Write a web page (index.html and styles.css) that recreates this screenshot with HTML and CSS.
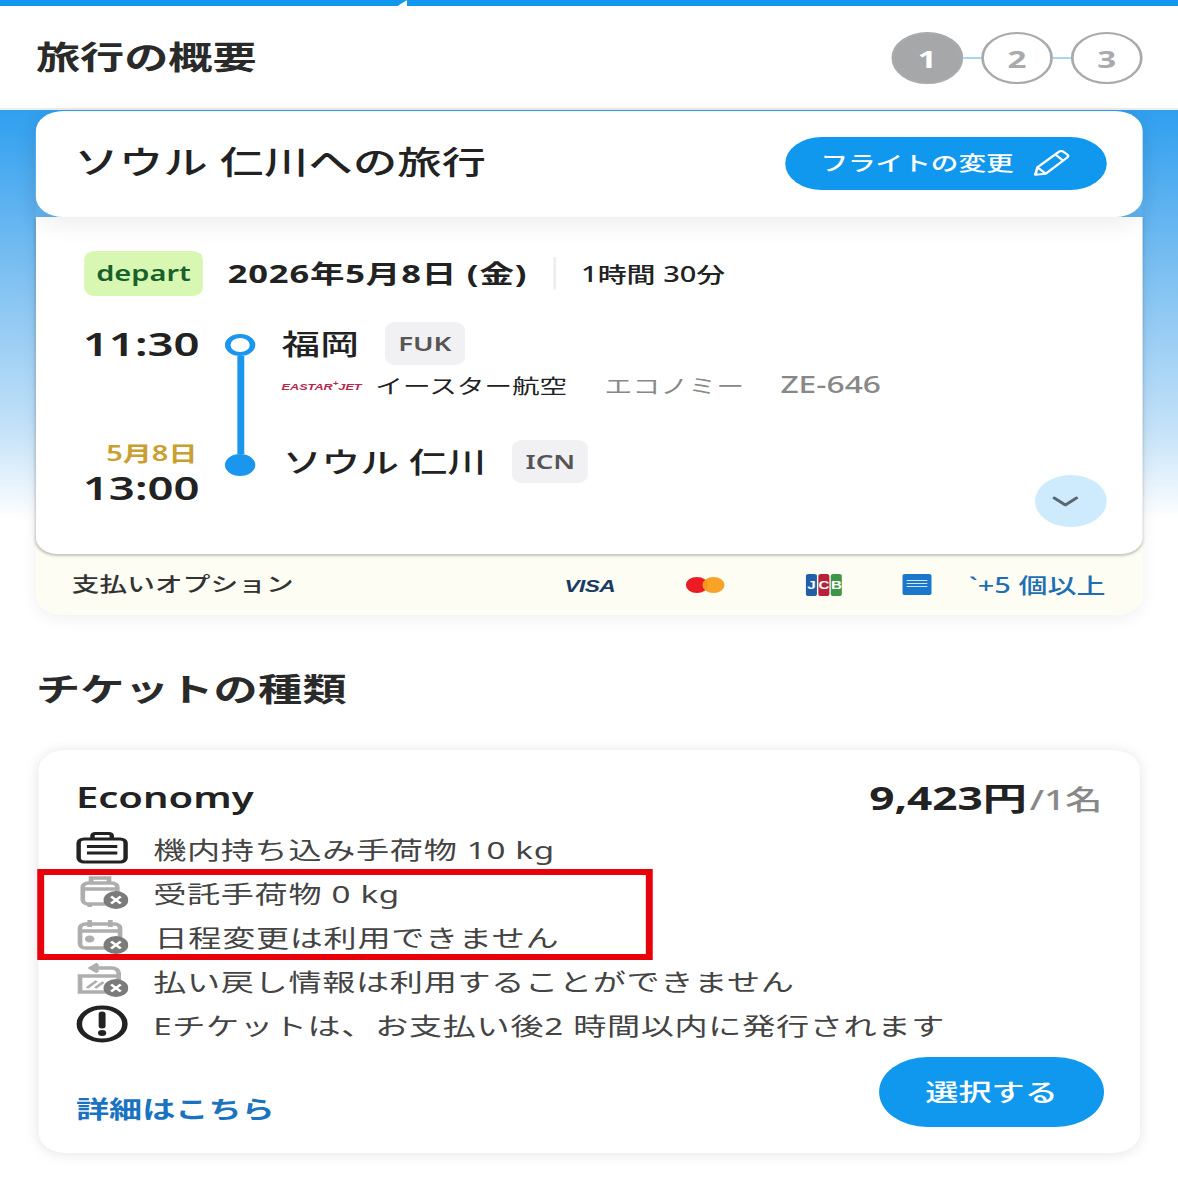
FILE: index.html
```html
<!DOCTYPE html>
<html lang="ja">
<head>
    <meta charset="utf-8">
    <title>旅行の概要</title>
    <link rel="stylesheet" href="styles.css">
</head>
<body>
    <div class="page">
        <div class="top-bar"><span class="top-notch"></span></div>
        <header class="header">
            <h1 class="header-title">旅行の概要</h1>
            <div class="steps">
                <span class="step step-active">1</span>
                <span class="step-line"></span>
                <span class="step">2</span>
                <span class="step-line"></span>
                <span class="step">3</span>
            </div>
        </header>

        <main class="main">
            <section class="trip-card">
                <div class="trip-head">
                    <h2 class="trip-title">ソウル 仁川への旅行</h2>
                    <button class="change-button">
                        <span class="change-label">フライトの変更</span>
                        <svg class="pencil" viewBox="0 0 28 28" width="30" height="30" fill="none" stroke="#fff" stroke-width="1.8" stroke-linejoin="round">
                            <path d="M3 25l1.500-7L19 3.500a2 2 0 0 1 3 0l2.500 2.500a2 2 0 0 1 0 3L10 24z"/>
                            <path d="M4.500 18l5.500 6M16.500 6l5.500 6"/>
                        </svg>
                    </button>
                </div>

                <div class="trip-body">
                    <div class="date-row">
                        <span class="depart-badge">depart</span>
                        <span class="date-text">2026年5月8日 (金)</span>
                        <span class="duration">1時間 30分</span>
                    </div>

                    <div class="timeline">
                        <div class="times">
                            <div class="time">11:30</div>
                            <div>
                                <div class="arrive-date">5月8日</div>
                                <div class="time">13:00</div>
                            </div>
                        </div>
                        <div class="track">
                            <span class="track-ring"></span>
                            <span class="track-line"></span>
                            <span class="track-dot"></span>
                        </div>
                        <div class="places">
                            <div class="city-row">
                                <span class="city">福岡</span>
                                <span class="code">FUK</span>
                            </div>
                            <div class="airline-row">
                                <span class="airline-logo">EASTAR<sup>+</sup>JET</span>
                                <span class="airline-name">イースター航空</span>
                                <span class="airline-info">エコノミー</span>
                                <span class="airline-number">ZE-646</span>
                            </div>
                            <div class="city-row city-row-last">
                                <span class="city">ソウル 仁川</span>
                                <span class="code">ICN</span>
                            </div>
                        </div>
                    </div>

                    <button class="expand-button" aria-label="expand">
                        <svg class="expand-icon" viewBox="0 0 20 12" width="20" height="12" fill="none" stroke="#5a6672" stroke-width="2.600" stroke-linecap="round" stroke-linejoin="round">
                            <path d="M2 2l8 7 8-7"/>
                        </svg>
                    </button>
                </div>

                <div class="pay-row">
                    <span class="pay-label">支払いオプション</span>
                    <span class="visa">VISA</span>
                    <span class="mastercard"><i class="mc-red"></i><i class="mc-orange"></i></span>
                    <span class="jcb"><i class="jcb-blue">J</i><i class="jcb-red">C</i><i class="jcb-green">B</i></span>
                    <span class="amex"><i></i><i></i><i></i></span>
                    <a class="pay-more">`+5 個以上</a>
                </div>
            </section>

            <h2 class="section-title">チケットの種類</h2>

            <section class="ticket-card">
                <div class="ticket-head">
                    <span class="ticket-name">Economy</span>
                    <span class="ticket-price">9,423円<small>/1名</small></span>
                </div>

                <ul class="ticket-list">
                    <li class="ticket-row">
                        <svg class="row-icon" viewBox="0 0 38 34" fill="none" stroke="#222" stroke-width="3.200">
                            <rect x="2" y="8" width="34" height="23" rx="4"/>
                            <path d="M12 8V4.500a2 2 0 0 1 2-2h10a2 2 0 0 1 2 2V8M8 15.500h22M8 22h22"/>
                        </svg>
                        機内持ち込み手荷物 10 kg
                    </li>
                    <li class="ticket-row">
                        <svg class="row-icon" viewBox="0 0 38 34" fill="none" stroke="#aeaeae" stroke-width="3.400">
                            <rect x="5" y="8" width="25" height="21" rx="4"/>
                            <path d="M11 8V3h13v5M5 14h25M10 29v3M25 29v3"/>
                            <circle cx="29" cy="25" r="9" fill="#7b7b7b" stroke="none"/>
                            <path d="M25.500 21.500l7 7M32.500 21.500l-7 7" stroke="#fff" stroke-width="2.200"/>
                        </svg>
                        受託手荷物 0 kg
                    </li>
                    <li class="ticket-row">
                        <svg class="row-icon" viewBox="0 0 38 34" fill="none" stroke="#aeaeae" stroke-width="3.400">
                            <rect x="3" y="5" width="29" height="24" rx="4"/>
                            <path d="M10 1v7M25 1v7M3 12h29"/>
                            <circle cx="10" cy="20" r="1.800" fill="#aeaeae"/>
                            <circle cx="29" cy="26" r="9" fill="#7b7b7b" stroke="none"/>
                            <path d="M25.500 22.500l7 7M32.500 22.500l-7 7" stroke="#fff" stroke-width="2.200"/>
                        </svg>
                        <span class="row-shift">日程変更は利用できません</span>
                    </li>
                    <li class="ticket-row">
                        <svg class="row-icon" viewBox="0 0 38 34" fill="none" stroke="#aeaeae" stroke-width="3.400">
                            <path d="M16 1l-5 4 5 4M11 5h15a5 5 0 0 1 5 5v4"/>
                            <path d="M3 13h28v16H3z"/>
                            <path d="M8 25l7-7M14 25l6-6" stroke-width="2.400"/>
                            <circle cx="29" cy="25" r="9" fill="#7b7b7b" stroke="none"/>
                            <path d="M25.500 21.500l7 7M32.500 21.500l-7 7" stroke="#fff" stroke-width="2.200"/>
                        </svg>
                        払い戻し情報は利用することができません
                    </li>
                    <li class="ticket-row">
                        <svg class="row-icon" viewBox="0 0 38 38" fill="none" stroke="#222" stroke-width="4">
                            <circle cx="19" cy="19" r="16.500"/>
                            <path d="M19 9v12" stroke-width="5" stroke-linecap="round"/>
                            <circle cx="19" cy="28" r="3" fill="#222" stroke="none"/>
                        </svg>
                        Eチケットは、お支払い後2 時間以内に発行されます
                    </li>
                </ul>

                <div class="ticket-foot">
                    <a class="detail-link">詳細はこちら</a>
                    <button class="select-button">選択する</button>
                </div>

                <div class="highlight-box"></div>
            </section>
        </main>
    </div>
</body>
</html>
```

FILE: styles.css
```css
html, body {
    margin: 0;
    padding: 0;
    height: 1178px;
    overflow: hidden;
    background: #fff;
}

/* the whole screen is stretched sideways */
.page {
    width: 854px;
    height: 1178px;
    transform: scaleX(1.38);
    transform-origin: left top;
    font-family: "Noto Sans", "Noto Sans CJK JP", sans-serif;
    color: #222;
}

.top-bar {
    height: 6px;
    background: #1098ef;
    position: relative;
}

.top-notch {
    position: absolute;
    left: 288px;
    top: 0;
    width: 7px;
    height: 6px;
    background: #fff;
    clip-path: polygon(100% 0, 100% 100%, 0 100%);
}

.header {
    height: 104px;
    box-sizing: border-box;
    padding: 0 26px 0 26px;
    display: flex;
    align-items: center;
    justify-content: space-between;
    background: #fff;
    border-bottom: 2px solid #eee;
}

.header-title {
    margin: 0;
    font-size: 32px;
    line-height: 44px;
    font-weight: 700;
    color: #2a2a2a;
}

.steps {
    display: flex;
    align-items: center;
    margin-top: 2px;
}

.step {
    width: 52px;
    height: 52px;
    box-sizing: border-box;
    border: 2px solid #a8aaab;
    border-radius: 50%;
    display: flex;
    align-items: center;
    justify-content: center;
    font-size: 24px;
    font-weight: 700;
    color: #a8aaab;
}

.step-active {
    background: #a5a7a8;
    color: #fff;
}

.step-line {
    width: 13px;
    height: 2px;
    background: #a5d6f5;
}

.main {
    padding: 1px 26px 0;
    background: linear-gradient(#2f9fef 0, #77bdf1 150px, #c4e2f8 320px, #fff 410px) no-repeat;
    background-size: 100% 410px;
}

.trip-card {
    border-radius: 20px;
    box-shadow: 0 4px 14px rgba(0, 0, 0, 0.06);
}

.trip-head {
    height: 106px;
    box-sizing: border-box;
    padding: 0 26px 0 28px;
    display: flex;
    align-items: center;
    justify-content: space-between;
    background: #fff;
    border-radius: 20px;
    box-shadow: 0 8px 20px rgba(0, 0, 0, 0.07);
    position: relative;
    z-index: 2;
}

.trip-title {
    margin: 0 0 4px;
    font-size: 32px;
    line-height: 44px;
    font-weight: 500;
    letter-spacing: 0.2px;
    color: #222;
}

.change-button {
    width: 233px;
    height: 53px;
    border: none;
    border-radius: 27px;
    background: #1098ef;
    color: #fff;
    font: inherit;
    font-size: 20px;
    font-weight: 500;
    display: flex;
    align-items: center;
    justify-content: center;
    gap: 12px;
    padding: 0;
    margin-top: -2px;
}

.change-label {
    margin-bottom: 2px;
}

.pencil {
    flex: none;
}

.trip-body {
    height: 337px;
    box-sizing: border-box;
    padding: 34px 26px 0 35px;
    background: #fff;
    border-radius: 0 0 16px 16px;
    box-shadow: 0 2px 2px rgba(0, 0, 0, 0.2), 0 0 6px rgba(0, 0, 0, 0.05);
    position: relative;
    z-index: 1;
}

.date-row {
    display: flex;
    align-items: center;
}

.depart-badge {
    width: 86px;
    height: 45px;
    padding-bottom: 2px;
    box-sizing: border-box;
    border-radius: 8px;
    background: #d8f7b2;
    color: #17612a;
    font-size: 21px;
    font-weight: 600;
    display: flex;
    align-items: center;
    justify-content: center;
    margin-right: 18px;
}

.date-text {
    font-size: 25px;
    font-weight: 700;
    letter-spacing: 0.6px;
    padding-right: 19px;
    border-right: 2px solid #eee;
    line-height: 33px;
}

.duration {
    font-size: 21px;
    font-weight: 500;
    margin-left: 18px;
    margin-bottom: 2px;
}

.timeline {
    display: flex;
    height: 188px;
    margin-top: 26px;
}

.times {
    width: 102px;
    display: flex;
    flex-direction: column;
    justify-content: space-between;
}

.time {
    font-size: 33px;
    line-height: 44px;
    font-weight: 600;
    margin-left: -1px;
}

.arrive-date {
    font-size: 21px;
    line-height: 28px;
    font-weight: 600;
    color: #c9a02f;
    padding-left: 16px;
    margin-top: 1px;
    margin-bottom: -1px;
}

.track {
    width: 22px;
    height: 142px;
    margin-top: 12px;
    display: flex;
    flex-direction: column;
    align-items: center;
}

.track-ring {
    flex: none;
    width: 22px;
    height: 22px;
    box-sizing: border-box;
    border: 4px solid #1a96ee;
    border-radius: 50%;
}

.track-line {
    flex: 1;
    width: 5px;
    background: #1a96ee;
}

.track-dot {
    flex: none;
    width: 22px;
    height: 22px;
    border-radius: 50%;
    background: #1a96ee;
}

.places {
    margin: -1px 0 0 19px;
}

.city-row {
    display: flex;
    align-items: center;
    height: 44px;
}

.city-row-last {
    margin-top: 40px;
    margin-left: 1px;
}

.city {
    font-size: 28px;
    font-weight: 500;
    margin-right: 19px;
}

.code {
    height: 43px;
    padding: 0 9.500px;
    border-radius: 8px;
    background: #f1f1f3;
    color: #555;
    font-size: 20px;
    font-weight: 600;
    display: flex;
    align-items: center;
}

.airline-row {
    display: flex;
    align-items: center;
    height: 28px;
    margin-top: 6px;
    font-size: 20px;
}

.airline-logo {
    width: 58px;
    margin: 4px 10px 0 0;
    font-family: "Liberation Sans", sans-serif;
    font-size: 9.200px;
    font-weight: 700;
    font-style: italic;
    color: #b8274a;
    white-space: nowrap;
}

.airline-logo sup {
    font-size: 7px;
    line-height: 0;
}

.airline-name {
    margin-right: 27px;
}

.airline-info {
    color: #888;
    letter-spacing: 0.3px;
    margin-right: 26px;
}

.airline-number {
    color: #888;
    font-size: 23px;
    font-weight: 500;
    margin-bottom: 2px;
}

.expand-button {
    position: absolute;
    right: 26px;
    bottom: 27px;
    width: 52px;
    height: 52px;
    padding: 0;
    border: none;
    border-radius: 50%;
    background: #cdebfd;
    display: flex;
    align-items: center;
    justify-content: center;
}

.expand-icon {
    margin: 2px 8px 0 0;
}

.pay-row {
    display: grid;
    grid-template-columns: 1fr 88px 87px 70px 48px auto;
    align-items: center;
    height: 77px;
    box-sizing: border-box;
    margin-top: -16px;
    padding: 16px 27px 0;
    background: #fdfdf3;
    border-radius: 0 0 20px 20px;
}

.pay-label {
    font-size: 20px;
    font-weight: 500;
    letter-spacing: 0.1px;
    color: #333;
    margin: 0 0 2px -1px;
}

.visa {
    font-family: "Liberation Sans", sans-serif;
    font-size: 16.500px;
    font-weight: 700;
    font-style: italic;
    color: #1c3a66;
    letter-spacing: -0.5px;
    margin-top: 3px;
}

.mastercard {
    display: flex;
}

.mastercard i {
    width: 16px;
    height: 16px;
    border-radius: 50%;
    display: block;
}

.mc-red {
    background: #eb1c24;
}

.mc-orange {
    background: #f79e1b;
    margin-left: -4px;
    opacity: 0.95;
}

.jcb {
    display: flex;
    gap: 1px;
}

.jcb i {
    width: 8px;
    height: 22px;
    border-radius: 2px;
    color: #fff;
    font-family: "Liberation Sans", sans-serif;
    font-size: 11px;
    font-style: normal;
    font-weight: 700;
    line-height: 22px;
    text-align: center;
}

.jcb-blue {
    background: #1f5fa8;
}

.jcb-red {
    background: #b8213a;
}

.jcb-green {
    background: #3c9645;
}

.amex {
    width: 21px;
    height: 21px;
    box-sizing: border-box;
    padding: 6px 3px;
    border-radius: 2px;
    background: #1a77cb;
    display: flex;
    flex-direction: column;
    gap: 2px;
}

.amex i {
    display: block;
    height: 1px;
    background: #cfe5f8;
}

.pay-more {
    font-size: 21px;
    font-weight: 500;
    color: #1f6fb5;
    white-space: nowrap;
    margin-bottom: 2px;
}

.section-title {
    margin: 52px 0 0 0;
    font-size: 32px;
    line-height: 44px;
    font-weight: 700;
    letter-spacing: 0.2px;
    color: #2a2a2a;
}

.ticket-card {
    position: relative;
    width: 798px;
    height: 403px;
    box-sizing: border-box;
    margin: 39px 0 0 2px;
    padding: 26px 26px 0 27px;
    background: #fff;
    border-radius: 20px;
    box-shadow: 0 1px 12px rgba(0, 0, 0, 0.11);
}

.ticket-head {
    display: flex;
    align-items: center;
    justify-content: space-between;
    height: 40px;
}

.ticket-name {
    font-size: 29px;
    font-weight: 600;
}

.ticket-price {
    font-size: 32px;
    font-weight: 700;
    margin-right: 1px;
}

.ticket-price small {
    font-size: 27px;
    font-weight: 500;
    color: #888;
    margin-left: 2px;
}

.ticket-list {
    list-style: none;
    margin: 10px 0 0;
    padding: 0;
}

.ticket-row {
    display: flex;
    align-items: center;
    height: 44px;
    font-size: 24px;
    letter-spacing: 0.5px;
    color: #444;
}

.row-icon {
    flex: none;
    width: 38px;
    height: 38px;
    margin-right: 18px;
}

.row-shift {
    margin-left: 1px;
}

.ticket-foot {
    display: flex;
    align-items: flex-end;
    justify-content: space-between;
    margin-top: 11px;
}

.detail-link {
    font-size: 24px;
    line-height: 36px;
    font-weight: 700;
    color: #1a73c0;
}

.select-button {
    width: 163px;
    height: 70px;
    padding: 0 0 4px;
    border: none;
    border-radius: 35px;
    background: #1098ef;
    color: #fff;
    font: inherit;
    font-size: 24px;
    font-weight: 500;
}

/* red annotation drawn on top of the screenshot */
.highlight-box {
    position: absolute;
    left: -1px;
    top: 119px;
    width: 446px;
    height: 91px;
    box-sizing: border-box;
    border: solid #e8000b;
    border-width: 6px 5px;
}
```
